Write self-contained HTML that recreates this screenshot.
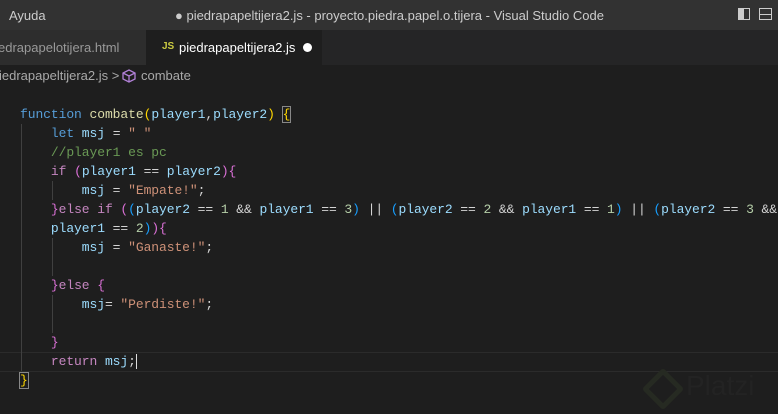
<!DOCTYPE html>
<html><head><style>
body{margin:0;width:778px;height:414px;overflow:hidden;background:#1e1e1e;font-family:"Liberation Sans",sans-serif;position:relative}
.title{position:absolute;left:0;top:0;width:778px;height:30px;background:#323232;color:#ccc;font-size:13px}
.tabs{position:absolute;top:30px;left:0;width:778px;height:35px;background:#252526}
.crumb{position:absolute;top:65px;left:0;width:778px;height:22px;background:#1e1e1e;color:#a9a9a9;font-size:13px}
.code{position:absolute;left:20px;top:105px;font-family:"Liberation Mono",monospace;font-size:13px;letter-spacing:-0.08px;line-height:19px;color:#d4d4d4;white-space:pre}
.k{color:#569cd6}.c{color:#c586c0}.f{color:#dcdcaa}.v{color:#9cdcfe}.s{color:#ce9178}.n{color:#b5cea8}.cm{color:#6a9955}.y{color:#ffd700}.p{color:#da70d6}.b{color:#179fff}
</style></head><body>
<div class="title">
<span style="position:absolute;left:9px;top:8px">Ayuda</span>
<span style="position:absolute;left:175px;top:8px">● piedrapapeltijera2.js - proyecto.piedra.papel.o.tijera - Visual Studio Code</span>
<div style="position:absolute;left:738px;top:8px;width:12px;height:12px;border:1px solid #ccc;box-sizing:border-box"><div style="width:5px;height:10px;background:#ccc"></div></div>
<div style="position:absolute;left:759px;top:8px;width:13px;height:12px;border:1px solid #ccc;box-sizing:border-box"><div style="margin-top:5px;height:1px;background:#ccc"></div></div>
</div>
<div class="tabs">
<div style="position:absolute;left:0;top:0;width:146px;height:35px;background:#2d2d2d;color:#999;font-size:13px"><span style="position:absolute;left:-2px;top:10px">edrapapelotijera.html</span></div>
<div style="position:absolute;left:146px;top:0;width:176px;height:35px;background:#1e1e1e;color:#fff;font-size:13px">
<span style="position:absolute;left:16px;top:11px;color:#cbcb41;font-size:10px;font-weight:bold">JS</span>
<span style="position:absolute;left:33px;top:10px">piedrapapeltijera2.js</span>
<span style="position:absolute;left:157px;top:13px;width:9px;height:9px;border-radius:50%;background:#fff"></span></div>
</div>
<div class="crumb"><span style="position:absolute;left:-1px;top:3px">iedrapapeltijera2.js &gt;</span>
<svg style="position:absolute;left:122px;top:4px" width="14" height="14" viewBox="0 0 14 14"><path d="M7 1L13 4V10L7 13L1 10V4Z M1 4L7 7L13 4 M7 7V13" fill="none" stroke="#b180d7" stroke-width="1.3"/></svg>
<span style="position:absolute;left:141px;top:3px">combate</span></div>
<div style="position:absolute;left:0;top:352px;width:778px;height:18px;border-top:1px solid #2b2b2b;border-bottom:1px solid #2b2b2b"></div>
<div style="position:absolute;left:21px;top:124px;width:1px;height:247px;background:#404040"></div>
<div style="position:absolute;left:52px;top:181px;width:1px;height:19px;background:#404040"></div>
<div style="position:absolute;left:52px;top:238px;width:1px;height:38px;background:#404040"></div>
<div style="position:absolute;left:52px;top:295px;width:1px;height:38px;background:#404040"></div>
<div class="code"><span class="k">function</span> <span class="f">combate</span><span class="y">(</span><span class="v">player1</span>,<span class="v">player2</span><span class="y">)</span> <span class="y" style="outline:1px solid #888">{</span>
    <span class="k">let</span> <span class="v">msj</span> = <span class="s">" "</span>
    <span class="cm">//player1 es pc</span>
    <span class="c">if</span> <span class="p">(</span><span class="v">player1</span> == <span class="v">player2</span><span class="p">){</span>
        <span class="v">msj</span> = <span class="s">"Empate!"</span>;
    <span class="p">}</span><span class="c">else if</span> <span class="p">(</span><span class="b">(</span><span class="v">player2</span> == <span class="n">1</span> &amp;&amp; <span class="v">player1</span> == <span class="n">3</span><span class="b">)</span> || <span class="b">(</span><span class="v">player2</span> == <span class="n">2</span> &amp;&amp; <span class="v">player1</span> == <span class="n">1</span><span class="b">)</span> || <span class="b">(</span><span class="v">player2</span> == <span class="n">3</span> &amp;&amp;
    <span class="v">player1</span> == <span class="n">2</span><span class="b">)</span><span class="p">){</span>
        <span class="v">msj</span> = <span class="s">"Ganaste!"</span>;

    <span class="p">}</span><span class="c">else</span> <span class="p">{</span>
        <span class="v">msj</span>= <span class="s">"Perdiste!"</span>;

    <span class="p">}</span>
    <span class="c">return</span> <span class="v">msj</span>;<span style="border-left:1.5px solid #ddd"></span>
<span class="y" style="outline:1px solid #888">}</span></div>
<div style="position:absolute;left:648px;top:374px;width:20px;height:20px;border:5px solid #262a22;transform:rotate(45deg);border-radius:3px"></div>
<div style="position:absolute;left:686px;top:370px;font-size:28px;color:#232323">Platzi</div>
</body></html>
